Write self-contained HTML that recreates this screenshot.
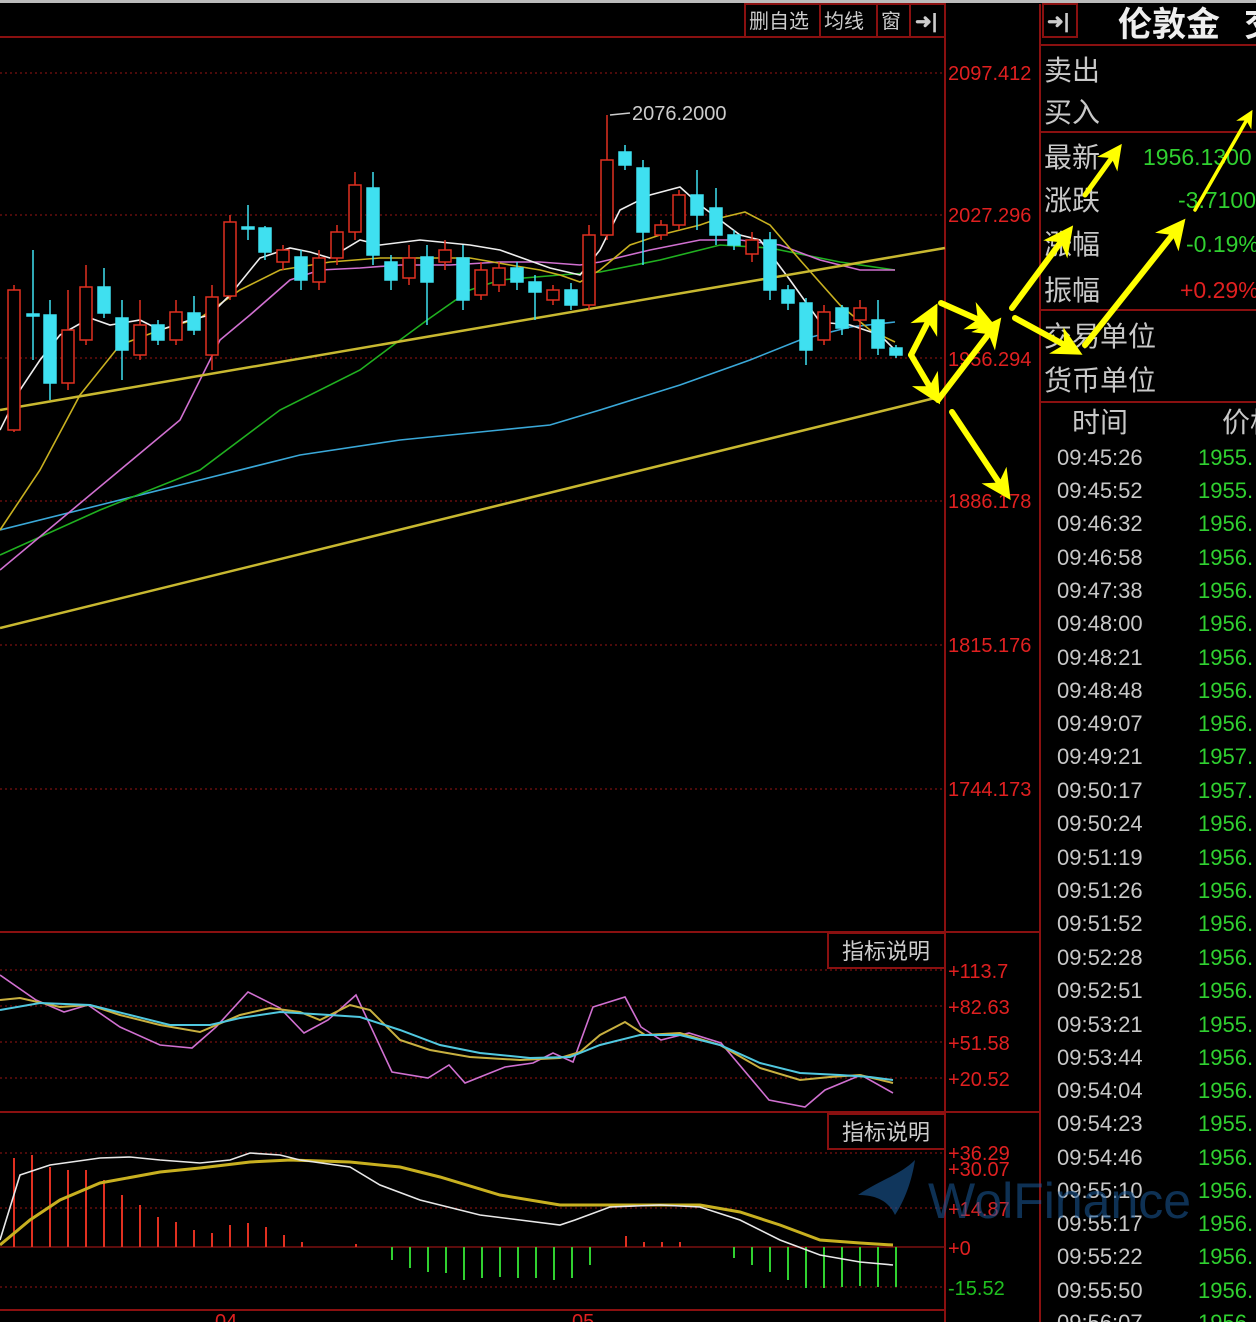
<!DOCTYPE html>
<html><head><meta charset="utf-8"><style>
html,body{margin:0;padding:0;background:#000;width:1256px;height:1322px;overflow:hidden}
svg{display:block}
text{font-family:"Liberation Sans","Noto Sans CJK SC",sans-serif}
</style></head><body>
<svg width="1256" height="1322" viewBox="0 0 1256 1322" xmlns="http://www.w3.org/2000/svg">
<defs>
<marker id="ah" viewBox="0 0 10 10" refX="6" refY="5" markerWidth="5" markerHeight="6" orient="auto"><path d="M0,0 L10,5 L0,10 L3,5 z" fill="#ffff00"/></marker>
</defs>
<rect width="1256" height="1322" fill="#000"/>
<rect x="0" y="0" width="1256" height="3" fill="#bbb"/>
<g stroke="#8a1010" stroke-width="2" fill="none">
<line x1="0" y1="37" x2="945" y2="37"/>
<line x1="945" y1="4" x2="945" y2="1322"/>
<line x1="1040" y1="4" x2="1040" y2="1322"/>
<line x1="0" y1="932" x2="1040" y2="932"/>
<line x1="0" y1="1112" x2="1040" y2="1112"/>
<line x1="0" y1="1310" x2="945" y2="1310"/>
<line x1="1040" y1="45" x2="1256" y2="45"/>
<line x1="1040" y1="132" x2="1256" y2="132"/>
<line x1="1040" y1="310" x2="1256" y2="310"/>
<line x1="1040" y1="402" x2="1256" y2="402"/>
<rect x="745" y="4" width="200" height="33"/>
<line x1="820" y1="4" x2="820" y2="37"/><line x1="877" y1="4" x2="877" y2="37"/><line x1="910" y1="4" x2="910" y2="37"/>
<rect x="1043" y="4" width="34" height="33"/>
<rect x="828" y="933" width="117" height="35"/>
<rect x="828" y="1114" width="117" height="35"/>
</g>
<g stroke="#7a1010" stroke-width="1.2" stroke-dasharray="2,3">
<line x1="0" y1="73" x2="945" y2="73"/><line x1="0" y1="215" x2="945" y2="215"/><line x1="0" y1="358" x2="945" y2="358"/>
<line x1="0" y1="501" x2="945" y2="501"/><line x1="0" y1="645" x2="945" y2="645"/><line x1="0" y1="789" x2="945" y2="789"/>
<line x1="0" y1="970" x2="945" y2="970"/><line x1="0" y1="1006" x2="945" y2="1006"/><line x1="0" y1="1042" x2="945" y2="1042"/><line x1="0" y1="1078" x2="945" y2="1078"/>
<line x1="0" y1="1153" x2="945" y2="1153"/><line x1="0" y1="1208" x2="945" y2="1208"/><line x1="0" y1="1287" x2="945" y2="1287"/>
</g>
<line x1="0" y1="1247" x2="945" y2="1247" stroke="#7a1010" stroke-width="1.5"/>
<g fill="#ccc" font-size="20">
<text x="749" y="28">删自选</text><text x="824" y="28">均线</text><text x="881" y="28">窗</text>
<text x="915" y="28" font-size="20" font-weight="bold">➜|</text>
<text x="1047" y="28" font-size="20" font-weight="bold">➜|</text>
</g>
<g fill="#e02020" font-size="20">
<text x="948" y="80">2097.412</text><text x="948" y="222">2027.296</text><text x="948" y="366">1956.294</text>
<text x="948" y="508">1886.178</text><text x="948" y="652">1815.176</text><text x="948" y="796">1744.173</text>
<text x="948" y="978">+113.7</text><text x="948" y="1014">+82.63</text><text x="948" y="1050">+51.58</text><text x="948" y="1086">+20.52</text>
<text x="948" y="1160">+36.29</text><text x="948" y="1176">+30.07</text><text x="948" y="1216">+14.87</text><text x="948" y="1255">+0</text>
<text x="948" y="1295" fill="#20c020">-15.52</text>
<text x="215" y="1328">04</text><text x="572" y="1328">05</text>
</g>
<g fill="#ccc" font-size="22"><text x="842" y="959">指标说明</text><text x="842" y="1140">指标说明</text></g>
<g fill="none" stroke-width="1.6">
<polyline stroke="#3aa8d8" points="0,530 100,505 200,480 300,455 400,440 500,430 550,425 600,410 680,385 750,360 800,340 850,327 895,322"/>
<polyline stroke="#20b020" points="0,555 100,510 200,470 280,410 360,370 400,340 430,318 470,290 500,280 560,275 600,272 660,260 720,245 770,248 840,262 895,270"/>
<polyline stroke="#d070d0" points="0,570 60,520 120,470 180,420 220,340 250,315 290,280 320,270 360,268 400,265 450,265 500,262 540,262 580,265 600,262 650,250 700,240 740,240 780,245 820,260 860,270 895,270"/>
<polyline stroke="#c8b020" points="0,530 40,470 80,395 120,345 160,330 200,318 240,290 280,270 330,262 380,258 430,258 470,258 510,265 540,270 560,275 580,282 600,270 630,245 660,235 700,225 720,218 745,212 770,225 800,260 840,305 870,330 895,342"/>
<polyline stroke="#eee" points="0,430 20,390 40,360 60,335 90,318 110,325 140,320 160,330 190,320 210,315 230,295 260,258 290,248 310,252 330,258 360,240 380,245 420,240 470,245 500,250 550,268 580,275 600,250 620,210 650,195 680,187 700,205 720,220 740,235 760,240 790,280 820,322 850,325 880,335 895,350"/>
</g>
<line x1="0" y1="410" x2="945" y2="248" stroke="#c8b830" stroke-width="2.5"/>
<line x1="0" y1="628" x2="935" y2="398" stroke="#c8b830" stroke-width="2.5"/>
<g stroke-width="1.5">
<g stroke="#e03020" fill="#000">
<line x1="14" y1="285" x2="14" y2="432"/><rect x="8" y="290" width="12" height="140"/>
<line x1="68" y1="290" x2="68" y2="390"/><rect x="62" y="330" width="12" height="53"/>
<line x1="86" y1="265" x2="86" y2="345"/><rect x="80" y="287" width="12" height="53"/>
<line x1="140" y1="300" x2="140" y2="360"/><rect x="134" y="325" width="12" height="30"/>
<line x1="176" y1="300" x2="176" y2="345"/><rect x="170" y="312" width="12" height="28"/>
<line x1="212" y1="285" x2="212" y2="370"/><rect x="206" y="297" width="12" height="58"/>
<line x1="230" y1="215" x2="230" y2="300"/><rect x="224" y="222" width="12" height="74"/>
<line x1="283" y1="245" x2="283" y2="270"/><rect x="277" y="250" width="12" height="12"/>
<line x1="319" y1="250" x2="319" y2="290"/><rect x="313" y="258" width="12" height="24"/>
<line x1="337" y1="225" x2="337" y2="265"/><rect x="331" y="232" width="12" height="26"/>
<line x1="355" y1="172" x2="355" y2="240"/><rect x="349" y="185" width="12" height="47"/>
<line x1="409" y1="245" x2="409" y2="285"/><rect x="403" y="258" width="12" height="20"/>
<line x1="445" y1="240" x2="445" y2="270"/><rect x="439" y="250" width="12" height="12"/>
<line x1="481" y1="262" x2="481" y2="300"/><rect x="475" y="270" width="12" height="25"/>
<line x1="499" y1="262" x2="499" y2="292"/><rect x="493" y="268" width="12" height="17"/>
<line x1="553" y1="285" x2="553" y2="305"/><rect x="547" y="290" width="12" height="10"/>
<line x1="589" y1="225" x2="589" y2="310"/><rect x="583" y="235" width="12" height="70"/>
<line x1="607" y1="115" x2="607" y2="240"/><rect x="601" y="160" width="12" height="75"/>
<line x1="661" y1="220" x2="661" y2="240"/><rect x="655" y="225" width="12" height="10"/>
<line x1="679" y1="190" x2="679" y2="230"/><rect x="673" y="195" width="12" height="30"/>
<line x1="752" y1="232" x2="752" y2="262"/><rect x="746" y="240" width="12" height="14"/>
<line x1="824" y1="305" x2="824" y2="345"/><rect x="818" y="312" width="12" height="28"/>
<line x1="860" y1="300" x2="860" y2="360"/><rect x="854" y="308" width="12" height="12"/>
</g>
<g stroke="#3fe0f0" fill="#3fe0f0">
<line x1="33" y1="250" x2="33" y2="360"/><rect x="27" y="314" width="12" height="2"/>
<line x1="50" y1="300" x2="50" y2="400"/><rect x="44" y="315" width="12" height="68"/>
<line x1="104" y1="268" x2="104" y2="318"/><rect x="98" y="287" width="12" height="26"/>
<line x1="122" y1="300" x2="122" y2="380"/><rect x="116" y="318" width="12" height="32"/>
<line x1="158" y1="320" x2="158" y2="345"/><rect x="152" y="325" width="12" height="15"/>
<line x1="194" y1="296" x2="194" y2="335"/><rect x="188" y="313" width="12" height="17"/>
<line x1="248" y1="205" x2="248" y2="240"/><rect x="242" y="227" width="12" height="2"/>
<line x1="265" y1="226" x2="265" y2="260"/><rect x="259" y="228" width="12" height="24"/>
<line x1="301" y1="250" x2="301" y2="290"/><rect x="295" y="257" width="12" height="23"/>
<line x1="373" y1="172" x2="373" y2="265"/><rect x="367" y="188" width="12" height="67"/>
<line x1="391" y1="255" x2="391" y2="290"/><rect x="385" y="262" width="12" height="18"/>
<line x1="427" y1="245" x2="427" y2="325"/><rect x="421" y="257" width="12" height="25"/>
<line x1="463" y1="245" x2="463" y2="310"/><rect x="457" y="258" width="12" height="42"/>
<line x1="517" y1="262" x2="517" y2="290"/><rect x="511" y="268" width="12" height="14"/>
<line x1="535" y1="275" x2="535" y2="320"/><rect x="529" y="282" width="12" height="10"/>
<line x1="571" y1="283" x2="571" y2="310"/><rect x="565" y="290" width="12" height="15"/>
<line x1="625" y1="145" x2="625" y2="170"/><rect x="619" y="152" width="12" height="13"/>
<line x1="643" y1="160" x2="643" y2="265"/><rect x="637" y="168" width="12" height="64"/>
<line x1="697" y1="170" x2="697" y2="230"/><rect x="691" y="195" width="12" height="20"/>
<line x1="716" y1="188" x2="716" y2="245"/><rect x="710" y="208" width="12" height="27"/>
<line x1="734" y1="230" x2="734" y2="250"/><rect x="728" y="235" width="12" height="10"/>
<line x1="770" y1="232" x2="770" y2="300"/><rect x="764" y="240" width="12" height="50"/>
<line x1="788" y1="285" x2="788" y2="310"/><rect x="782" y="290" width="12" height="13"/>
<line x1="806" y1="298" x2="806" y2="365"/><rect x="800" y="303" width="12" height="47"/>
<line x1="842" y1="305" x2="842" y2="335"/><rect x="836" y="308" width="12" height="20"/>
<line x1="878" y1="300" x2="878" y2="355"/><rect x="872" y="320" width="12" height="28"/>
<line x1="896" y1="345" x2="896" y2="358"/><rect x="890" y="348" width="12" height="7"/>
</g>
</g>
<line x1="610" y1="115" x2="630" y2="113" stroke="#ccc" stroke-width="1.5"/>
<text x="632" y="120" fill="#ccc" font-size="20">2076.2000</text>
<g fill="none" stroke-width="1.6">
<polyline stroke="#d070d0" points="0,975 36,1000 64,1012 88,1005 120,1027 160,1045 192,1048 216,1027 248,992 280,1008 304,1033 328,1020 356,995 392,1072 428,1078 449,1065 465,1083 505,1067 533,1063 553,1053 573,1062 593,1007 625,997 641,1027 661,1040 689,1033 721,1043 769,1100 805,1107 825,1090 861,1075 893,1093"/>
<polyline stroke="#c8b040" stroke-width="2" points="0,1000 20,998 60,1007 90,1005 120,1015 160,1025 200,1032 240,1015 270,1008 300,1012 320,1020 350,1005 370,1010 400,1040 430,1050 470,1057 520,1060 560,1058 580,1052 600,1035 625,1022 645,1035 680,1033 720,1045 760,1068 800,1080 830,1077 860,1075 893,1083"/>
<polyline stroke="#50c8e0" stroke-width="2" points="0,1010 40,1003 90,1005 130,1015 170,1025 210,1025 240,1018 280,1012 330,1015 360,1017 400,1030 440,1045 480,1053 530,1058 570,1057 600,1045 640,1035 680,1035 720,1045 760,1063 800,1073 840,1075 870,1077 893,1080"/>
</g>
<g stroke="#e03020" stroke-width="2">
<line x1="14" y1="1247" x2="14" y2="1158"/><line x1="32" y1="1247" x2="32" y2="1155"/><line x1="50" y1="1247" x2="50" y2="1167"/><line x1="68" y1="1247" x2="68" y2="1170"/><line x1="86" y1="1247" x2="86" y2="1170"/><line x1="104" y1="1247" x2="104" y2="1180"/><line x1="122" y1="1247" x2="122" y2="1195"/><line x1="140" y1="1247" x2="140" y2="1205"/><line x1="158" y1="1247" x2="158" y2="1217"/><line x1="176" y1="1247" x2="176" y2="1222"/><line x1="194" y1="1247" x2="194" y2="1230"/><line x1="212" y1="1247" x2="212" y2="1233"/><line x1="230" y1="1247" x2="230" y2="1225"/><line x1="248" y1="1247" x2="248" y2="1223"/><line x1="266" y1="1247" x2="266" y2="1227"/><line x1="284" y1="1247" x2="284" y2="1235"/><line x1="302" y1="1247" x2="302" y2="1242"/><line x1="356" y1="1247" x2="356" y2="1244"/>
<line x1="626" y1="1247" x2="626" y2="1236"/><line x1="644" y1="1247" x2="644" y2="1242"/><line x1="662" y1="1247" x2="662" y2="1242"/><line x1="680" y1="1247" x2="680" y2="1242"/>
</g>
<g stroke="#30d030" stroke-width="2">
<line x1="392" y1="1247" x2="392" y2="1260"/><line x1="410" y1="1247" x2="410" y2="1268"/><line x1="428" y1="1247" x2="428" y2="1272"/><line x1="446" y1="1247" x2="446" y2="1273"/><line x1="464" y1="1247" x2="464" y2="1280"/><line x1="482" y1="1247" x2="482" y2="1278"/><line x1="500" y1="1247" x2="500" y2="1277"/><line x1="518" y1="1247" x2="518" y2="1278"/><line x1="536" y1="1247" x2="536" y2="1278"/><line x1="554" y1="1247" x2="554" y2="1280"/><line x1="572" y1="1247" x2="572" y2="1278"/><line x1="590" y1="1247" x2="590" y2="1265"/>
<line x1="734" y1="1247" x2="734" y2="1258"/><line x1="752" y1="1247" x2="752" y2="1265"/><line x1="770" y1="1247" x2="770" y2="1272"/><line x1="788" y1="1247" x2="788" y2="1280"/><line x1="806" y1="1247" x2="806" y2="1288"/><line x1="824" y1="1247" x2="824" y2="1288"/><line x1="842" y1="1247" x2="842" y2="1287"/><line x1="860" y1="1247" x2="860" y2="1286"/><line x1="878" y1="1247" x2="878" y2="1287"/><line x1="896" y1="1247" x2="896" y2="1287"/>
</g>
<g fill="none">
<polyline stroke="#c8b020" stroke-width="3" points="0,1245 30,1220 60,1200 100,1183 160,1172 200,1168 250,1162 290,1160 350,1162 400,1167 440,1177 500,1195 560,1205 620,1205 700,1205 740,1212 780,1225 820,1240 860,1243 893,1245"/>
<polyline stroke="#e8e8e8" stroke-width="1.6" points="0,1240 20,1175 50,1165 100,1158 130,1157 160,1160 200,1163 230,1160 250,1153 280,1155 300,1160 350,1167 380,1185 420,1200 480,1215 520,1220 560,1225 575,1220 610,1207 660,1205 700,1207 740,1220 780,1240 820,1255 860,1262 893,1265"/>
</g>
<text x="1118" y="36" fill="#eee" font-size="34" font-weight="bold" font-family="Liberation Serif,Noto Serif CJK SC,serif">伦敦金</text>
<text x="1244" y="36" fill="#eee" font-size="34" font-weight="bold" font-family="Liberation Serif,Noto Serif CJK SC,serif">交</text>
<g fill="#c8c8c8" font-size="28">
<text x="1044" y="80">卖出</text><text x="1044" y="122">买入</text>
<text x="1044" y="167">最新</text><text x="1044" y="210">涨跌</text><text x="1044" y="254">涨幅</text><text x="1044" y="300">振幅</text>
<text x="1044" y="346">交易单位</text><text x="1044" y="390">货币单位</text>
<text x="1072" y="432">时间</text><text x="1222" y="432">价格</text>
</g>
<g font-size="23">
<text x="1143" y="165" fill="#30d030">1956.1300</text>
<text x="1178" y="208" fill="#30d030">-3.7100</text>
<text x="1186" y="252" fill="#30d030">-0.19%</text>
<text x="1180" y="298" fill="#e02020">+0.29%</text>
</g>
<g fill="#c8c8c8" font-size="22">
<text x="1057" y="465">09:45:26</text><text x="1057" y="498">09:45:52</text><text x="1057" y="531">09:46:32</text><text x="1057" y="565">09:46:58</text><text x="1057" y="598">09:47:38</text><text x="1057" y="631">09:48:00</text><text x="1057" y="665">09:48:21</text><text x="1057" y="698">09:48:48</text><text x="1057" y="731">09:49:07</text><text x="1057" y="764">09:49:21</text><text x="1057" y="798">09:50:17</text><text x="1057" y="831">09:50:24</text><text x="1057" y="865">09:51:19</text><text x="1057" y="898">09:51:26</text><text x="1057" y="931">09:51:52</text><text x="1057" y="965">09:52:28</text><text x="1057" y="998">09:52:51</text><text x="1057" y="1032">09:53:21</text><text x="1057" y="1065">09:53:44</text><text x="1057" y="1098">09:54:04</text><text x="1057" y="1131">09:54:23</text><text x="1057" y="1165">09:54:46</text><text x="1057" y="1198">09:55:10</text><text x="1057" y="1231">09:55:17</text><text x="1057" y="1264">09:55:22</text><text x="1057" y="1298">09:55:50</text><text x="1057" y="1330">09:56:07</text>
</g>
<g fill="#30d030" font-size="22">
<text x="1198" y="465">1955.</text><text x="1198" y="498">1955.</text><text x="1198" y="531">1956.</text><text x="1198" y="565">1956.</text><text x="1198" y="598">1956.</text><text x="1198" y="631">1956.</text><text x="1198" y="665">1956.</text><text x="1198" y="698">1956.</text><text x="1198" y="731">1956.</text><text x="1198" y="764">1957.</text><text x="1198" y="798">1957.</text><text x="1198" y="831">1956.</text><text x="1198" y="865">1956.</text><text x="1198" y="898">1956.</text><text x="1198" y="931">1956.</text><text x="1198" y="965">1956.</text><text x="1198" y="998">1956.</text><text x="1198" y="1032">1955.</text><text x="1198" y="1065">1956.</text><text x="1198" y="1098">1956.</text><text x="1198" y="1131">1955.</text><text x="1198" y="1165">1956.</text><text x="1198" y="1198">1956.</text><text x="1198" y="1231">1956.</text><text x="1198" y="1264">1956.</text><text x="1198" y="1298">1956.</text><text x="1198" y="1330">1956.</text>
</g>
<path d="M858,1195 C880,1180 900,1175 915,1160 C912,1180 905,1200 895,1215 C888,1200 875,1195 858,1195 z" fill="#1a5a9a" opacity="0.6"/>
<text x="928" y="1218" fill="#1a5a9a" opacity="0.55" font-size="50">WolFinance</text>
<g stroke="#ffff00" stroke-width="6" fill="none" marker-end="url(#ah)" stroke-linecap="round">
<line x1="911" y1="355" x2="932" y2="314"/>
<line x1="911" y1="355" x2="934" y2="394"/>
<line x1="938" y1="400" x2="994" y2="327"/>
<line x1="941" y1="303" x2="986" y2="323"/>
<line x1="952" y1="412" x2="1004" y2="490"/>
<line x1="1015" y1="318" x2="1072" y2="349"/>
<line x1="1012" y1="308" x2="1066" y2="235"/>
<line x1="1085" y1="345" x2="1178" y2="228"/>
<line x1="1085" y1="195" x2="1116" y2="152" stroke-width="5"/>
<line x1="1195" y1="210" x2="1249" y2="116" stroke-width="3.5"/>
</g>
</svg>
</body></html>
